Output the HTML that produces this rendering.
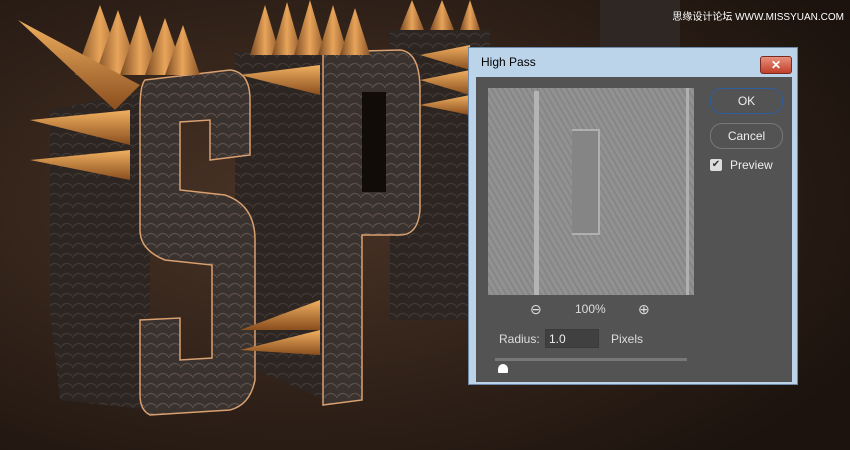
<!DOCTYPE html>
<html><head><style>
body{margin:0;width:850px;height:450px;overflow:hidden;background:#2a1d15;font-family:"Liberation Sans",Arial,sans-serif}
.abs{position:absolute}
</style></head><body>
<svg class="abs" style="left:0;top:0" width="850" height="450">
<defs>
<radialGradient id="bg" cx="0.35" cy="0.45" r="0.75"><stop offset="0" stop-color="#4a3426"/><stop offset="1" stop-color="#1c130e"/></radialGradient>
<linearGradient id="sp" x1="0" y1="0" x2="1" y2="0"><stop offset="0" stop-color="#7a4a22"/><stop offset="0.5" stop-color="#e8a45a"/><stop offset="1" stop-color="#8a5428"/></linearGradient>
<linearGradient id="sh" x1="0" y1="0" x2="0" y2="1"><stop offset="0" stop-color="#f0b060"/><stop offset="1" stop-color="#8a4e1e"/></linearGradient>
<pattern id="tx" width="12" height="10" patternUnits="userSpaceOnUse"><rect width="12" height="10" fill="#3a322e"/><path d="M0,8 Q6,0 12,6" stroke="#5e504a" stroke-width="1.2" fill="none"/></pattern>
<pattern id="tx2" width="12" height="10" patternUnits="userSpaceOnUse"><rect width="12" height="10" fill="#2c2521"/><path d="M0,8 Q6,0 12,6" stroke="#433935" stroke-width="1.2" fill="none"/></pattern>
</defs>
<rect width="850" height="450" fill="url(#bg)"/>
<rect x="390" y="30" width="100" height="290" fill="url(#tx2)"/>
<rect x="600" y="0" width="80" height="50" fill="#2e2723"/>
<polygon points="235,52 325,52 325,400 255,370 255,300 235,300" fill="url(#tx2)"/>
<path d="M323,52 L400,50 Q420,52 420,90 L420,210 Q418,235 400,235 L362,235 L362,400 L323,405 Z" fill="url(#tx)" stroke="#d9a070" stroke-width="1.5"/>
<rect x="362" y="92" width="24" height="100" fill="#120c09"/>
<polygon points="50,110 150,90 150,410 60,400 50,310" fill="url(#tx2)"/>
<path d="M145,80 L230,70 Q250,72 250,100 L250,155 L210,160 L210,120 L180,122 L180,190 L225,195 Q255,205 255,240 L255,380 Q250,405 230,410 L150,415 Q140,410 140,395 L140,320 L180,318 L180,360 L212,358 L212,265 L165,260 Q140,250 140,230 L140,110 Q140,85 145,80 Z" fill="url(#tx)" stroke="#d9a070" stroke-width="1.5"/>
<g fill="url(#sp)">
<polygon points="75,75 100,5 125,75"/><polygon points="95,75 118,10 140,75"/><polygon points="120,75 140,15 160,75"/><polygon points="145,75 165,18 185,75"/><polygon points="165,75 183,25 200,75"/>
<polygon points="250,55 265,5 280,55"/><polygon points="272,55 287,2 302,55"/><polygon points="294,55 310,0 326,55"/><polygon points="318,55 333,5 348,55"/><polygon points="340,55 355,8 370,55"/>
<polygon points="400,30 412,0 424,30"/><polygon points="430,30 442,0 454,30"/><polygon points="460,30 470,0 480,30"/>
</g>
<g fill="url(#sh)">
<polygon points="18,20 140,85 115,110"/>
<polygon points="30,120 130,110 130,145"/><polygon points="30,160 130,150 130,180"/>
<polygon points="240,75 320,65 320,95"/><polygon points="240,330 320,300 320,330"/><polygon points="240,350 320,330 320,355"/>
<polygon points="420,55 470,45 470,70"/><polygon points="420,80 470,70 470,95"/><polygon points="420,105 470,95 470,115"/>
</g>
</svg>
<div class="abs" style="left:468px;top:47px;width:330px;height:338px;background:#bcd4ea;border:1px solid #6f8aa8;box-sizing:border-box">
 <div class="abs" style="left:12px;top:7px;font-size:12px;color:#000">High Pass</div>
 <div class="abs" style="left:291px;top:8px;width:30px;height:16px;background:linear-gradient(#e8907c,#c0402c);border:1px solid #7a2a20;border-radius:3px;color:#fff;font-size:12px;font-weight:bold;text-align:center;line-height:16px">✕</div>
 <div class="abs" style="left:7px;top:29px;width:316px;height:305px;background:#535353">
  <div class="abs" style="left:12px;top:11px;width:206px;height:207px;background:#8c8c8c;background-image:repeating-linear-gradient(60deg,#868686 0 2px,#929292 2px 5px)">
   <div class="abs" style="left:46px;top:3px;width:5px;height:204px;background:#b4b4b4"></div>
   <div class="abs" style="left:84px;top:41px;width:26px;height:102px;border:2px solid #b0b0b0;border-left:none;background:#858585"></div>
   <div class="abs" style="left:198px;top:0;width:3px;height:207px;background:#b0b0b0"></div>
  </div>
  <div class="abs" style="left:234px;top:11px;width:71px;height:24px;border:1px solid #2e5e9e;border-radius:12px;color:#eee;font-size:12px;text-align:center;line-height:24px">OK</div>
  <div class="abs" style="left:234px;top:46px;width:71px;height:24px;border:1px solid #777;border-radius:12px;color:#eee;font-size:12px;text-align:center;line-height:24px">Cancel</div>
  <div class="abs" style="left:234px;top:82px;width:12px;height:12px;background:#ddd;border-radius:2px;color:#333;font-size:10px;line-height:12px;text-align:center">✔</div>
  <div class="abs" style="left:254px;top:81px;color:#eee;font-size:12px">Preview</div>
  <div class="abs" style="left:54px;top:224px;color:#ddd;font-size:14px">⊖</div>
  <div class="abs" style="left:99px;top:225px;color:#ddd;font-size:12px">100%</div>
  <div class="abs" style="left:162px;top:224px;color:#ddd;font-size:14px">⊕</div>
  <div class="abs" style="left:23px;top:255px;color:#ddd;font-size:12px">Radius:</div>
  <div class="abs" style="left:69px;top:252px;width:54px;height:19px;background:#404040;border:1px solid #3a3a3a;color:#eee;font-size:12px;line-height:19px;padding-left:3px;box-sizing:border-box">1.0</div>
  <div class="abs" style="left:135px;top:255px;color:#ddd;font-size:12px">Pixels</div>
  <div class="abs" style="left:19px;top:281px;width:192px;height:3px;background:#777"></div>
  <div class="abs" style="left:22px;top:287px;width:10px;height:9px;background:#fff;border-radius:5px 5px 1px 1px"></div>
 </div>
</div>
<div class="abs" style="right:6px;top:8px;color:#fff;font-size:10px">思缘设计论坛 WWW.MISSYUAN.COM</div>
</body></html>
